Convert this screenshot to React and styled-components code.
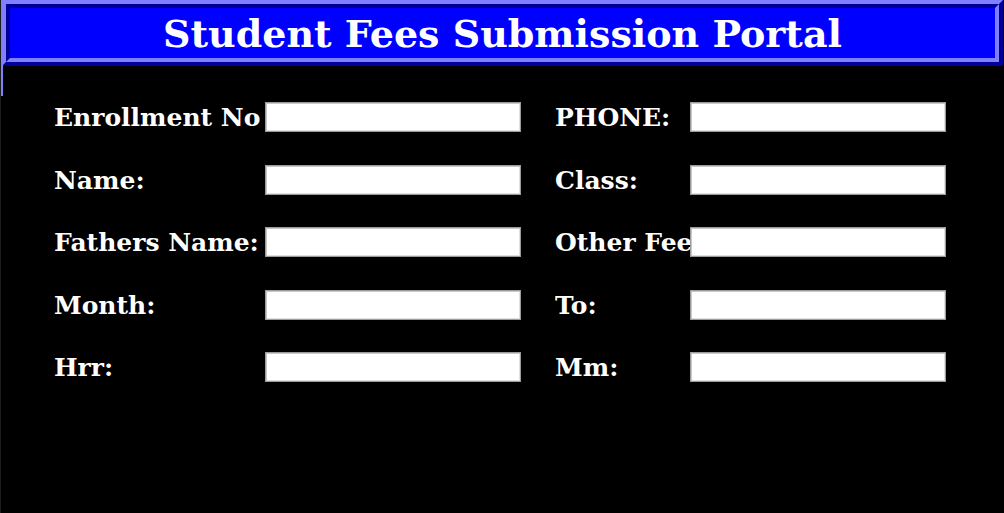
import React from "react";
import styled, { createGlobalStyle } from "styled-components";

const fields = [
  ["Enrollment No:", "PHONE:"],
  ["Name:", "Class:"],
  ["Fathers Name:", "Other Fees:"],
  ["Month:", "To:"],
  ["Hrr:", "Mm:"]
];

const App = () => (
  <Window>
    <GlobalStyle />
    <Header>
      <Title>Student Fees Submission Portal</Title>
    </Header>
    <Form>
      {fields.map(([left, right]) => (
        <React.Fragment key={left}>
          <Label $width="208px">{left}</Label>
          <Entry type="text" />
          <Label>{right}</Label>
          <Entry type="text" />
        </React.Fragment>
      ))}
    </Form>
  </Window>
);

export default App;

const GlobalStyle = createGlobalStyle`
  html, body {
    margin: 0;
    background: #000;
    height: 100%;
    overflow: hidden;
  }
`;

const Window = styled.div`
  height: 513px;
  background: #000;
  border-left: 1px solid #1c1c1c;
  position: relative;
  font-family: "DejaVu Serif", serif;

  &::before {
    content: "";
    position: absolute;
    left: 0;
    top: 0;
    width: 2px;
    height: 96px;
    background: #8080ff;
  }
`;

const Header = styled.div`
  margin: 0 1px 0 1px;
  border: 4px solid;
  border-color: #8080ff #000099 #000099 #8080ff;
`;

const Title = styled.h1`
  margin: 0;
  height: 50px;
  border: 4px solid;
  border-color: #000099 #8080ff #8080ff #000099;
  background: #0000ff;
  color: #fff;
  font-size: 38px;
  font-weight: 700;
  text-align: center;
  line-height: 52px;
`;

const Form = styled.div`
  display: grid;
  grid-template-columns: 211px 256px 34px 135px 256px;
  grid-auto-rows: 30px;
  row-gap: 32.5px;
  padding: 36px 0 0 53px;

  & > :nth-child(4n + 3) {
    grid-column: 4;
  }
`;

const Label = styled.div`
  width: ${p => p.$width || "auto"};
  color: #fff;
  font-size: 25px;
  font-weight: 700;
  line-height: 32px;
  white-space: nowrap;
  overflow: hidden;
`;

const Entry = styled.input`
  box-sizing: border-box;
  width: 256px;
  height: 30px;
  margin: 0;
  padding: 0 4px;
  background: #fff;
  border: 1px solid #9c9c9c;
  box-shadow: inset 1px 1px 0 #c8c8c8, inset -1px -1px 0 #e0e0e0;
  outline: none;
`;
